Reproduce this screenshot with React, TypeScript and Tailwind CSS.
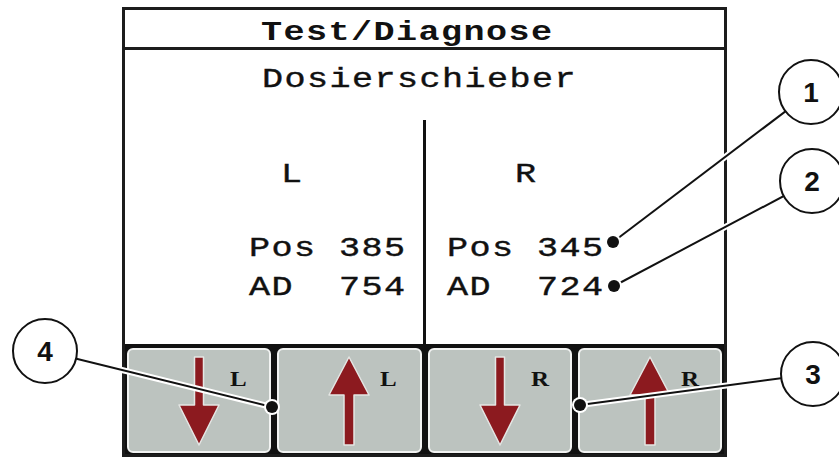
import React from "react";

function DownArrow() {
  return (
    <svg width="44" height="92" viewBox="0 0 44 92" className="block">
      <path
        d="M17.5 2 H26.5 V50 H42 L22 90 L2 50 H17.5 Z"
        fill="#8c1a1f"
        stroke="#e4e6e4"
        strokeWidth="1.5"
        strokeLinejoin="round"
      />
    </svg>
  );
}

function UpArrow() {
  return (
    <svg width="44" height="92" viewBox="0 0 44 92" className="block">
      <path
        d="M22 2 L42 40 H27 V90 H17 V40 H2 Z"
        fill="#8c1a1f"
        stroke="#e4e6e4"
        strokeWidth="1.5"
        strokeLinejoin="round"
      />
    </svg>
  );
}

function Btn({ up, label }: { up: boolean; label: string }) {
  return (
    <div className="flex-1 rounded-[6px] border-2 border-[#f2f3f2] bg-[#bcc3bf] grid grid-cols-[1fr_auto_1fr]">
      <div />
      <div className="pt-[5px]">{up ? <UpArrow /> : <DownArrow />}</div>
      <div className="pl-[9px] pt-[19px] font-['Liberation_Serif',serif] font-bold text-[20px] leading-[20px] text-[#111]">
        <span className="inline-block origin-left scale-x-[1.25]">{label}</span>
      </div>
    </div>
  );
}

function T({ children }: { children: React.ReactNode }) {
  return <span className="inline-block origin-left scale-x-[1.3] tracking-[1.1px] whitespace-pre">{children}</span>;
}

const lines: [number, number, number, number][] = [
  [613, 242, 811, 92],
  [614, 286, 812, 181],
  [580, 405, 813, 374],
  [272, 407, 45, 351],
];

const circles: [number, number, string][] = [
  [811, 92, "1"],
  [812, 181, "2"],
  [813, 374, "3"],
  [45, 351, "4"],
];

export default function App() {
  return (
    <div className="relative w-[839px] h-[457px] bg-white overflow-hidden">
      <div className="ml-[122px] mt-[7px] w-[605px] h-[450px] border-[3px] border-[#1c1c1c] flex flex-col font-['Liberation_Mono',monospace] text-[27px] text-[#111]">
        <div className="h-[40px] shrink-0 border-b-[3px] border-[#1c1c1c] pt-[6px] pl-[136px] leading-[34px] font-bold">
          <T>Test/Diagnose</T>
        </div>
        <div className="flex-1 flex flex-col pt-[13px] [-webkit-text-stroke:0.4px_#111]">
          <div className="pl-[137px] leading-[34px]">
            <T>Dosierschieber</T>
          </div>
          <div className="mt-[23px] flex-1 grid grid-cols-[298px_3px_298px]">
            <div className="flex flex-col pt-[38px] leading-[34px]">
              <div className="pl-[156px]"><T>L</T></div>
              <div className="pl-[124px] mt-[40px]"><T>Pos 385</T></div>
              <div className="pl-[124px] mt-[5px]"><T>AD  754</T></div>
            </div>
            <div className="bg-[#111]" />
            <div className="flex flex-col pt-[38px] leading-[34px]">
              <div className="pl-[89px]"><T>R</T></div>
              <div className="pl-[21px] mt-[40px]"><T>Pos 345</T></div>
              <div className="pl-[21px] mt-[5px]"><T>AD  724</T></div>
            </div>
          </div>
        </div>
        <div className="h-[110px] shrink-0 border-t-[3px] border-[#111] bg-[#111] pt-[1px] pb-[1px] px-[2px] flex gap-[6px]">
          <Btn up={false} label="L" />
          <Btn up={true} label="L" />
          <Btn up={false} label="R" />
          <Btn up={true} label="R" />
        </div>
      </div>

      <svg className="absolute left-0 top-0 pointer-events-none" width="839" height="457" viewBox="0 0 839 457">
        {lines.map(([x1, y1, x2, y2], i) => (
          <line key={"h" + i} x1={x1} y1={y1} x2={x2} y2={y2} stroke="#fff" strokeWidth="6" />
        ))}
        {lines.map(([x1, y1, x2, y2], i) => (
          <line key={"l" + i} x1={x1} y1={y1} x2={x2} y2={y2} stroke="#111" strokeWidth="2" />
        ))}
        {lines.map(([x1, y1], i) => (
          <g key={"d" + i}>
            <circle cx={x1} cy={y1} r="8" fill="#fff" />
            <circle cx={x1} cy={y1} r="6" fill="#111" />
          </g>
        ))}
        {circles.map(([cx, cy, t]) => (
          <g key={t}>
            <circle cx={cx} cy={cy} r="32" fill="#fff" stroke="#111" strokeWidth="2" />
            <text
              x={cx}
              y={cy + 10}
              textAnchor="middle"
              fontFamily="'Liberation Sans', Arial, sans-serif"
              fontWeight="bold"
              fontSize="28"
              fill="#111"
            >
              {t}
            </text>
          </g>
        ))}
      </svg>
    </div>
  );
}
